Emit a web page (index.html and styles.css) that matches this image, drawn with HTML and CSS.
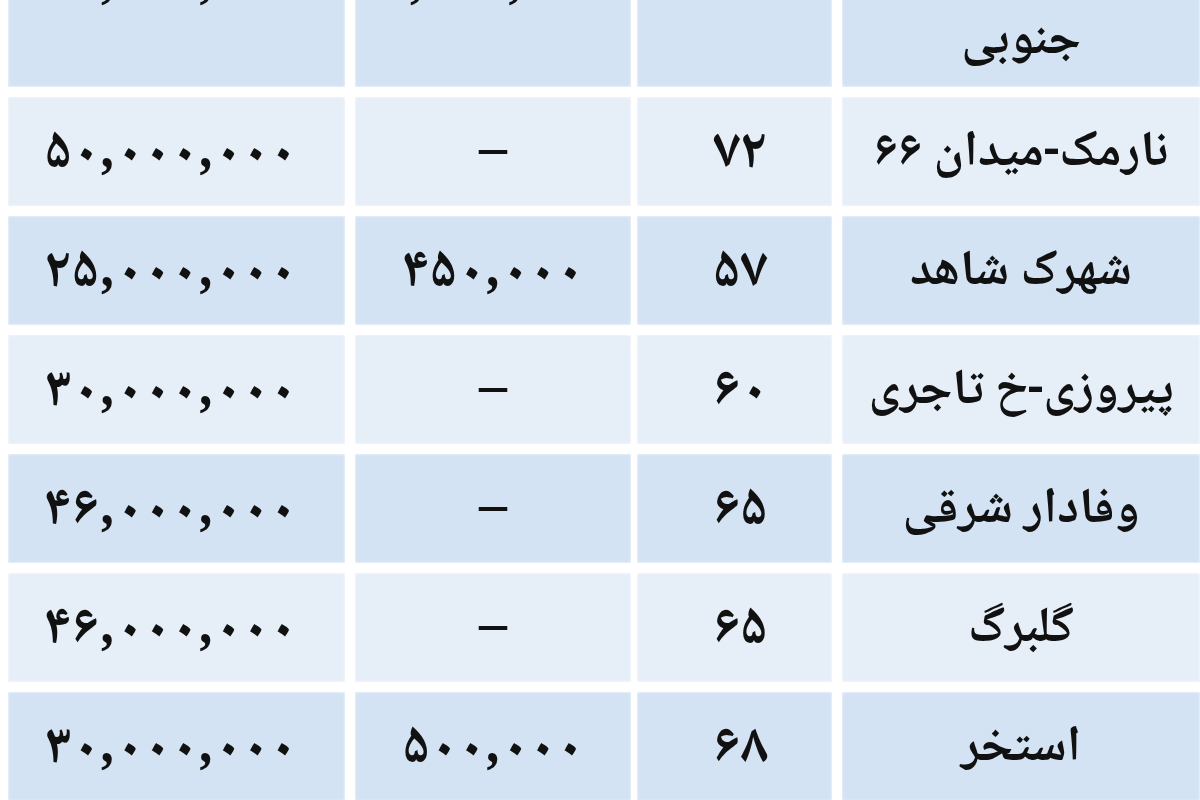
FILE: index.html
```html
<!DOCTYPE html>
<html lang="fa" dir="rtl">
<head>
<meta charset="utf-8">
<title>جدول</title>
<link rel="stylesheet" href="styles.css">
</head>
<body>
<div class="table">
  <div class="row top dark">
    <div class="cell c-name"><span class="lines">تهرانپارس<br>جنوبی</span></div>
    <div class="cell c-area">۱۰۰</div>
    <div class="cell c-price"><span class="num">۱,۲۰۰,۰۰۰</span></div>
    <div class="cell c-total"><span class="num">۴۰,۰۰۰,۰۰۰</span></div>
  </div>
  <div class="row light">
    <div class="cell c-name">نارمک-میدان ۶۶</div>
    <div class="cell c-area">۷۲</div>
    <div class="cell c-price">–</div>
    <div class="cell c-total"><span class="num">۵۰,۰۰۰,۰۰۰</span></div>
  </div>
  <div class="row dark">
    <div class="cell c-name">شهرک شاهد</div>
    <div class="cell c-area">۵۷</div>
    <div class="cell c-price"><span class="num">۴۵۰,۰۰۰</span></div>
    <div class="cell c-total"><span class="num">۲۵,۰۰۰,۰۰۰</span></div>
  </div>
  <div class="row light">
    <div class="cell c-name">پیروزی-خ تاجری</div>
    <div class="cell c-area">۶۰</div>
    <div class="cell c-price">–</div>
    <div class="cell c-total"><span class="num">۳۰,۰۰۰,۰۰۰</span></div>
  </div>
  <div class="row dark">
    <div class="cell c-name">وفادار شرقی</div>
    <div class="cell c-area">۶۵</div>
    <div class="cell c-price">–</div>
    <div class="cell c-total"><span class="num">۴۶,۰۰۰,۰۰۰</span></div>
  </div>
  <div class="row light">
    <div class="cell c-name">گلبرگ</div>
    <div class="cell c-area">۶۵</div>
    <div class="cell c-price">–</div>
    <div class="cell c-total"><span class="num">۴۶,۰۰۰,۰۰۰</span></div>
  </div>
  <div class="row dark">
    <div class="cell c-name">استخر</div>
    <div class="cell c-area">۶۸</div>
    <div class="cell c-price"><span class="num">۵۰۰,۰۰۰</span></div>
    <div class="cell c-total"><span class="num">۳۰,۰۰۰,۰۰۰</span></div>
  </div>
</div>
</body>
</html>
```

FILE: styles.css
```css
html, body {
  margin: 0;
  padding: 0;
  background: #ffffff;
  overflow: hidden;
}

body {
  width: 1200px;
  height: 800px;
  font-family: "Noto Naskh Arabic", "Noto Sans Arabic", "DejaVu Sans", sans-serif;
  font-weight: bold;
  color: #111111;
}

.table {
  display: flex;
  flex-direction: column;
  gap: 10px;
  margin-top: -101px;
  padding-left: 8px;
}

.row {
  display: grid;
  grid-template-columns: 368px 201px 286px 337px;
  height: 109px;
}

.row.top {
  height: 188px;
}

.cell {
  display: flex;
  align-items: center;
  justify-content: center;
  text-align: center;
  font-size: 56px;
  line-height: 1;
  padding-top: 6px;
  box-sizing: border-box;
  box-shadow: inset 0 0 3px rgba(255, 255, 255, 0.9);
}

.top .cell {
  padding-bottom: 22px;
}

.c-name {
  font-size: 50px;
  margin-left: 10px;
}

.top .c-name {
  align-items: flex-end;
  padding-bottom: 8px;
}

.lines {
  line-height: 72px;
}

.dark .cell {
  background: #d3e3f3;
}

.light .cell {
  background: #e6eef8;
}

.c-area {
  margin-left: 6px;
  letter-spacing: 3px;
  padding-left: 12px;
}

.c-price {
  margin-left: 10px;
}

.num {
  direction: ltr;
  unicode-bidi: isolate;
  letter-spacing: 12px;
}

.c-total .num {
  margin-right: 12px;
}
```
